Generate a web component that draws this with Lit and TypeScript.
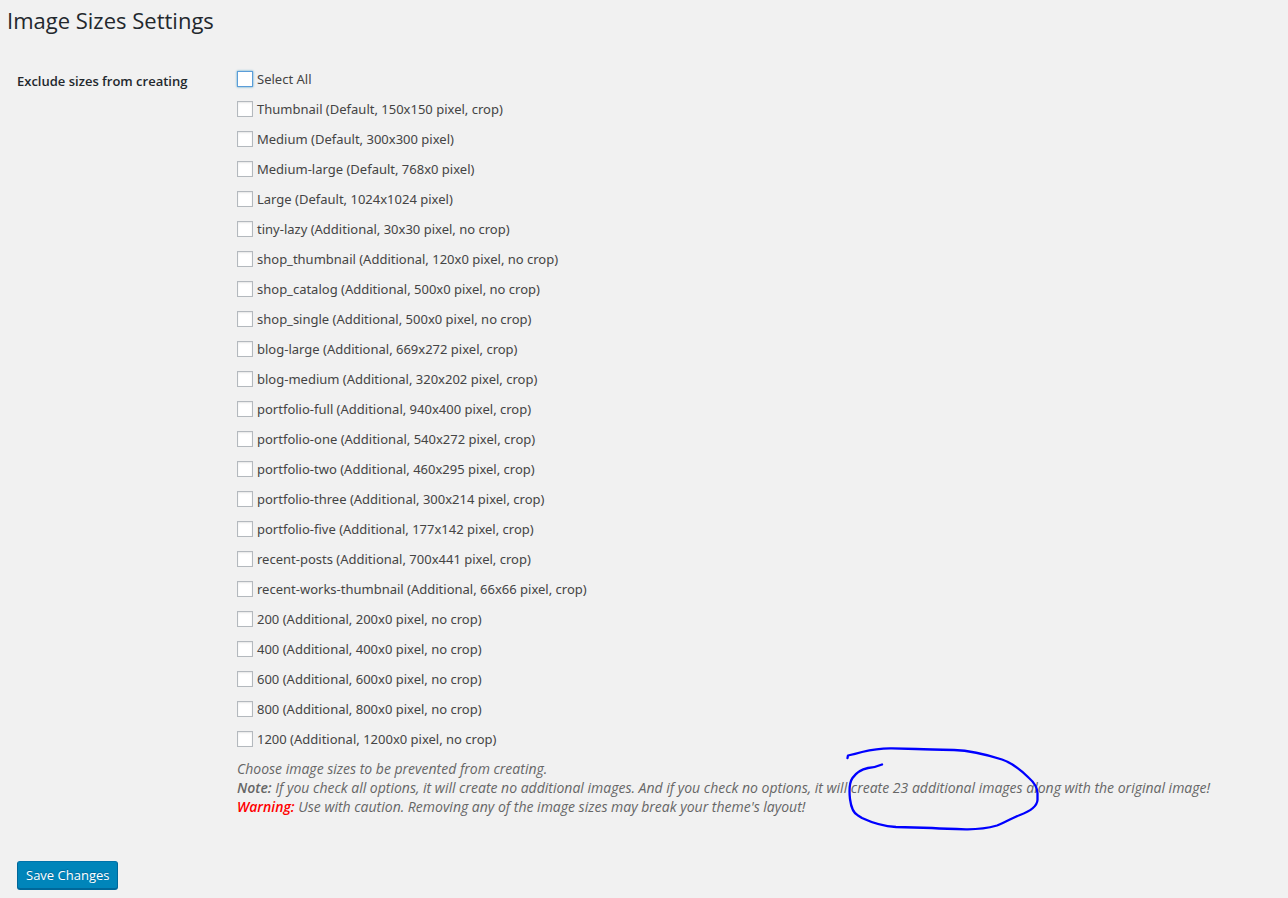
import { LitElement, html, css } from "lit";
import { customElement, state } from "lit/decorators.js";

const SIZES = [
  "Thumbnail (Default, 150x150 pixel, crop)",
  "Medium (Default, 300x300 pixel)",
  "Medium-large (Default, 768x0 pixel)",
  "Large (Default, 1024x1024 pixel)",
  "tiny-lazy (Additional, 30x30 pixel, no crop)",
  "shop_thumbnail (Additional, 120x0 pixel, no crop)",
  "shop_catalog (Additional, 500x0 pixel, no crop)",
  "shop_single (Additional, 500x0 pixel, no crop)",
  "blog-large (Additional, 669x272 pixel, crop)",
  "blog-medium (Additional, 320x202 pixel, crop)",
  "portfolio-full (Additional, 940x400 pixel, crop)",
  "portfolio-one (Additional, 540x272 pixel, crop)",
  "portfolio-two (Additional, 460x295 pixel, crop)",
  "portfolio-three (Additional, 300x214 pixel, crop)",
  "portfolio-five (Additional, 177x142 pixel, crop)",
  "recent-posts (Additional, 700x441 pixel, crop)",
  "recent-works-thumbnail (Additional, 66x66 pixel, crop)",
  "200 (Additional, 200x0 pixel, no crop)",
  "400 (Additional, 400x0 pixel, no crop)",
  "600 (Additional, 600x0 pixel, no crop)",
  "800 (Additional, 800x0 pixel, no crop)",
  "1200 (Additional, 1200x0 pixel, no crop)",
];

@customElement("app-root")
export class AppRoot extends LitElement {
  @state() private checked: boolean[] = SIZES.map(() => false);

  static styles = css`
    :host {
      display: block;
      box-sizing: border-box;
      min-height: 100vh;
      padding: 7px;
      background: #f1f1f1;
      color: #444;
      font: 13px/20px "Open Sans", "Noto Sans", sans-serif;
    }
    .title { margin: 0; font-size: 22px; line-height: 26px; font-weight: 400; color: #23282d; }
    .form { margin: 0; }
    .fields { display: grid; grid-template-columns: 200px 1fr; column-gap: 20px; padding: 31px 10px 45px; }
    .heading { margin: 7px 0; font-weight: 600; color: #23282d; }
    .option { display: flex; align-items: center; gap: 4px; height: 30px; font-family: "Noto Sans", sans-serif; }
    .box {
      appearance: none;
      box-sizing: border-box;
      width: 16px;
      height: 16px;
      margin: 0;
      border: 1px solid #b4b9be;
      background: #fff;
      box-shadow: inset 0 1px 2px rgba(0, 0, 0, 0.1);
    }
    .box.active { border-color: #5b9dd9; box-shadow: 0 0 2px rgba(30, 140, 190, 0.8); }
    .box:checked { background: #1e8cbe; }
    .help { margin: 5px 0 0; font-size: 14px; line-height: 19px; font-style: italic; color: #666; }
    .help b { font-weight: 600; }
    .help .warning { color: #f00; }
    .marked { position: relative; }
    .ring { position: absolute; left: -53px; top: -38px; width: 200px; height: 95px; pointer-events: none; }
    .save {
      margin: 0 10px;
      padding: 0 8px;
      height: 29px;
      border: 1px solid #006799;
      border-color: #0073aa #006799 #006799;
      border-bottom-width: 2px;
      border-radius: 3px;
      background: #0085ba;
      color: #fff;
      font: 13px/26px "Open Sans", sans-serif;
      text-shadow: 0 -1px 1px #006799;
    }
  `;

  private toggleAll(e: Event) {
    const on = (e.target as HTMLInputElement).checked;
    this.checked = SIZES.map(() => on);
  }

  private toggle(i: number) {
    this.checked = this.checked.map((v, n) => (n === i ? !v : v));
  }

  render() {
    return html`
      <h1 class="title">Image Sizes Settings</h1>
      <form class="form" @submit=${(e: Event) => e.preventDefault()}>
        <div class="fields" role="group" aria-labelledby="heading">
          <div class="heading" id="heading">Exclude sizes from creating</div>
          <div>
            <label class="option"><input class="box active" type="checkbox" @change=${this.toggleAll} />Select All</label>
            ${SIZES.map((s, i) => html`<label class="option"><input class="box" type="checkbox" .checked=${this.checked[i]} @change=${() => this.toggle(i)} />${s}</label>`)}
            <p class="help">
              Choose image sizes to be prevented from creating.<br />
              <b>Note:</b> If you check all options, it will create no additional images. And if you check no options, it will create <span class="marked">23 additional images<svg class="ring" viewBox="0 0 200 95" fill="none" stroke="#00f" stroke-width="2.3" stroke-linecap="round" stroke-linejoin="round" aria-hidden="true"><path d="M7.500 18L8 15.500Q15 14 22 12Q38 8 52 8.300L76 9Q90 9.700 114 10C130 10.500 148 15 162 19.500C174 23.500 182 31 189 38Q197 45 197.500 53V60C197 67 188 72 180 75C172 78 166 82 157 85.500C148 88 140 89.500 126 89.300Q106 89 92 88L56 87Q39 86 22 78L18 75.500C13 73 11 67 10 59C9 50 9 43 12.500 38Q18 30 28 28Q35 27.500 42 24.500"/></svg></span> along with the original image!<br />
              <b class="warning">Warning:</b> Use with caution. Removing any of the image sizes may break your theme's layout!
            </p>
          </div>
        </div>
        <button class="save" type="submit">Save Changes</button>
      </form>
    `;
  }
}
